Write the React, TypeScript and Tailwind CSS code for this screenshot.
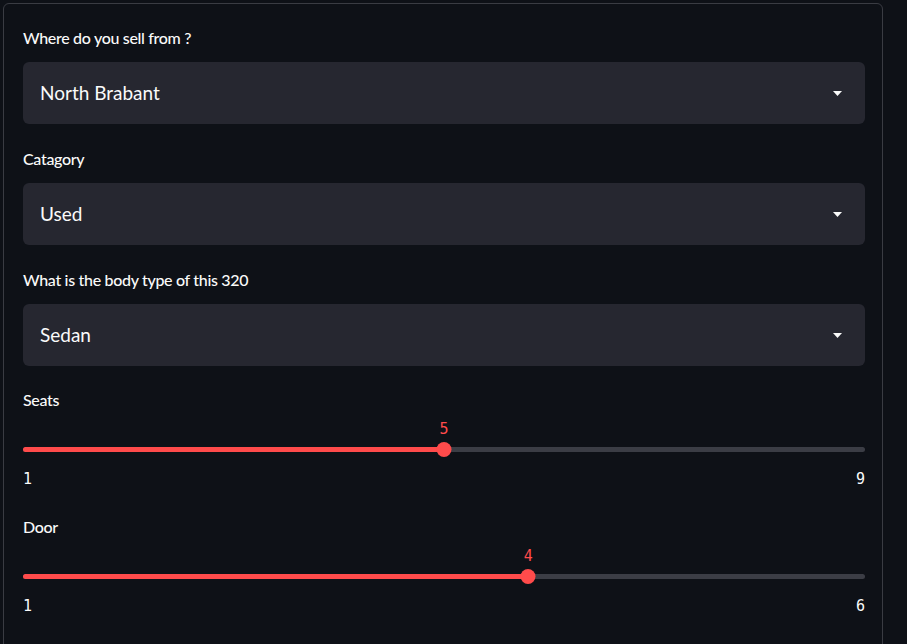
import React from "react";

const selects = [
  { label: "Where do you sell from ?", value: "North Brabant" },
  { label: "Catagory", value: "Used" },
  { label: "What is the body type of this 320", value: "Sedan" },
];

const sliders = [
  { label: "Seats", min: 1, max: 9, value: 5 },
  { label: "Door", min: 1, max: 6, value: 4 },
];

function Caret() {
  return (
    <svg width="9" height="5" viewBox="0 0 9 5" className="shrink-0">
      <path d="M0 0 L9 0 L4.5 5 Z" fill="#fafafa" />
    </svg>
  );
}

function SelectBox({ label, value }: { label: string; value: string }) {
  return (
    <div className="flex flex-col">
      <label className="h-6 text-[16px] font-medium leading-6 tracking-[-0.02em] text-[#fafafa]">
        {label}
      </label>
      <div className="mt-3 flex h-[62px] items-center justify-between rounded-md bg-[#262730] pl-[17px] pr-[23px]">
        <span className="text-[19px] text-[#fafafa]">{value}</span>
        <Caret />
      </div>
    </div>
  );
}

function Slider({
  label,
  min,
  max,
  value,
}: {
  label: string;
  min: number;
  max: number;
  value: number;
}) {
  const pct = ((value - min) / (max - min)) * 100;
  return (
    <div className="flex flex-col">
      <label className="h-6 text-[16px] font-medium leading-6 tracking-[-0.02em] text-[#fafafa]">
        {label}
      </label>
      <div className="relative mt-[9px] h-[33px]">
        <span
          className="absolute top-0 -translate-x-1/2 font-['DejaVu_Sans_Mono',monospace] text-[15px] leading-4 text-[#ff4b4b]"
          style={{ left: `${pct}%` }}
        >
          {value}
        </span>
        <div className="absolute top-[26px] h-[5px] w-full rounded-full bg-[#3b3d45]" />
        <div
          className="absolute top-[26px] h-[5px] rounded-full bg-[#ff4b4b]"
          style={{ width: `${pct}%` }}
        />
        <div
          className="absolute top-[21px] h-[15px] w-[15px] -translate-x-1/2 rounded-full bg-[#ff4b4b]"
          style={{ left: `${pct}%` }}
        />
      </div>
      <div className="mt-[15px] flex justify-between font-['DejaVu_Sans_Mono',monospace] text-[15px] leading-5 text-[#fafafa]">
        <span>{min}</span>
        <span>{max}</span>
      </div>
    </div>
  );
}

export default function App() {
  return (
    <div className="h-[644px] overflow-hidden bg-[#0e1117] pl-[3px] pt-[3px] font-['Lato',sans-serif]">
      <div className="h-[700px] w-[880px] rounded-md border border-[#3a3c43] pl-[19px] pr-[17px] pt-[22px]">
        <div className="flex flex-col gap-[23px]">
          {selects.map((s) => (
            <SelectBox key={s.label} label={s.label} value={s.value} />
          ))}
        </div>
        <div className="mt-[22px] flex flex-col gap-[26px]">
          {sliders.map((s) => (
            <Slider key={s.label} {...s} />
          ))}
        </div>
      </div>
    </div>
  );
}
